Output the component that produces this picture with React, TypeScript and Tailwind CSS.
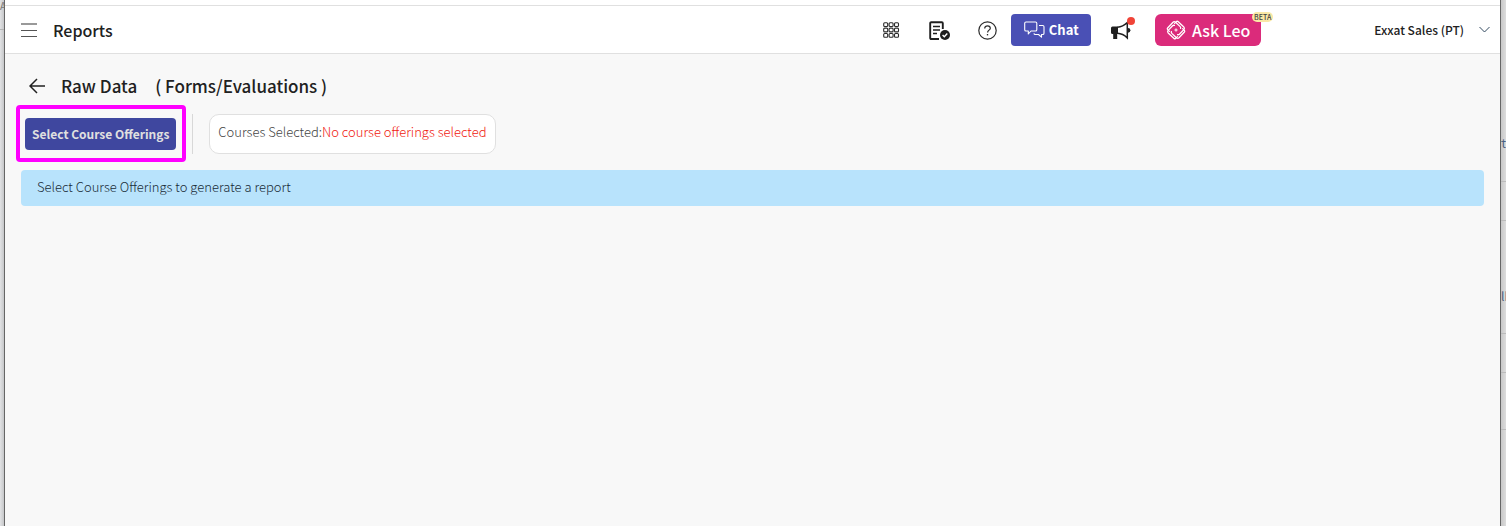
import type { ReactNode } from 'react'

function IconButton({ label, className, children }: { label: string; className: string; children: ReactNode }) {
  return (
    <button type="button" aria-label={label} className={`flex shrink-0 items-center justify-center ${className}`}>
      {children}
    </button>
  )
}

function GridIcon() {
  const cells = [0.7, 6.1, 11.5]
  return (
    <svg width="17" height="17" viewBox="0 0 17 17" fill="none" stroke="#2b2b2b" strokeWidth="1.1">
      {cells.map((y) =>
        cells.map((x) => <rect key={`${x}-${y}`} x={x} y={y} width="4" height="3.8" rx="1" />)
      )}
    </svg>
  )
}

function FormCheckIcon() {
  return (
    <svg width="22" height="20" viewBox="0 0 22 20" fill="none" stroke="#1f1f1f">
      <path d="M10 18H2.2a1 1 0 0 1-1-1V2.2a1 1 0 0 1 1-1h10.6a1 1 0 0 1 1 1V8" strokeWidth="1.9" />
      <path d="M4 5.5h7M4 9h7M4 12.5h4" strokeWidth="1.5" />
      <circle cx="16" cy="14" r="5" fill="#1f1f1f" stroke="none" />
      <path d="m13.6 14.1 1.7 1.7 3-3.2" stroke="#fff" strokeWidth="1.4" />
    </svg>
  )
}

function HelpIcon() {
  return (
    <svg width="19" height="19" viewBox="0 0 19 19" fill="none" stroke="#2b2b2b">
      <circle cx="9.5" cy="9.5" r="8.7" strokeWidth="1.2" />
      <path d="M6.7 7.4c0-1.6 1.2-2.6 2.8-2.6s2.8 1 2.8 2.4c0 1.9-2.7 2-2.7 4.2" strokeWidth="1.2" />
      <path d="M9.5 13v1.4" strokeWidth="1.3" />
    </svg>
  )
}

function ChatIcon() {
  return (
    <svg width="21" height="17" viewBox="0 0 21 17" fill="none" stroke="#fff" strokeWidth="1.1" strokeLinejoin="round">
      <path d="M2 1h9.5a1.3 1.3 0 0 1 1.3 1.3v6.4A1.3 1.3 0 0 1 11.5 10H7l-2.7 3V10H2A1.3 1.3 0 0 1 .7 8.7V2.3A1.3 1.3 0 0 1 2 1Z" />
      <path d="M15 4.5h3.7A1.3 1.3 0 0 1 20 5.8v6.4a1.3 1.3 0 0 1-1.3 1.3h-1.2v2.7l-3-2.7h-3.2a1.3 1.3 0 0 1-1.3-1.3" />
    </svg>
  )
}

function MegaphoneIcon() {
  return (
    <svg width="20" height="19" viewBox="0 0 20 19" fill="#1f1f1f">
      <path d="M1.5 5.5H7v7.5H6.2V18H2.200v-5H1.500A1.500 1.500 0 0 1 0 11.500V7a1.500 1.500 0 0 1 1.500-1.500Z" />
      <path d="M6.500 6.200C10.500 6 13.500 4.300 16.300 1.500v15.500c-2.800-2.800-5.800-4.500-9.800-4.700" fill="none" stroke="#1f1f1f" strokeWidth="1.500" />
      <path d="M17 6.900a2.400 2.400 0 0 1 0 4.800Z" />
    </svg>
  )
}

function LeoIcon() {
  return (
    <svg width="20" height="20" viewBox="0 0 20 20" fill="none" stroke="#fff" strokeWidth="1.3" strokeLinecap="round" strokeLinejoin="round">
      {[0, 90, 180, 270].map((angle) => (
        <path key={angle} transform={`rotate(${angle} 10 10)`} d="M3.4 11.400 1.600 9.600Q.9 8.800 1.600 8L7 2.200Q8.200 1 9.600 2.200L14.200 6.600Q15 7.500 14.600 8.400" />
      ))}
      <path d="M10 8.800v2.400M8.800 10h2.400" strokeWidth="1" />
    </svg>
  )
}

export default function App() {
  return (
    <div className="flex min-h-screen bg-[#d6d7d8] font-['Noto_Sans_CJK_SC',sans-serif] text-[#212121]">
      {/* sliver of the page behind the panel */}
      <div className="w-1 shrink-0 overflow-hidden bg-linear-to-r from-[#e2e3e5] to-[#c6c7c9] text-[10px] leading-3 text-[#777]">
        <div className="h-[30px] border-b border-[#b5b5b5]">A</div>
      </div>

      <div className="min-w-0 flex-1 border-x border-[#666] bg-[#f8f8f8]">
        <div className="h-[5px] bg-white" />
        <header className="flex h-[49px] items-center border-y border-[#e0e0e0] bg-white pr-2.5 pl-4">
          <IconButton label="Menu" className="w-4">
            <svg width="16" height="14" viewBox="0 0 16 14" stroke="#555">
              <path d="M0 1h16" strokeWidth="2" stroke="#999" />
              <path d="M0 7.5h16M0 13.5h16" />
            </svg>
          </IconButton>
          <h1 className="ml-4 text-base leading-6 font-medium">Reports</h1>

          <div className="ml-auto flex items-center">
            <IconButton label="Apps" className="w-[18px] pt-0.5"><GridIcon /></IconButton>
            <IconButton label="Forms" className="ml-7 w-6 pt-0.5"><FormCheckIcon /></IconButton>
            <IconButton label="Help" className="ml-[23px] w-6 pt-0.5"><HelpIcon /></IconButton>
            <button type="button" className="ml-3 flex h-8 w-20 items-center justify-center gap-1 rounded bg-[#4a50b5] text-[13px] font-bold text-white">
              <ChatIcon />
              Chat
            </button>
            <IconButton label="Announcements" className="relative ml-[18px] w-6 pt-0.5">
              <MegaphoneIcon />
              <span className="absolute -top-0.5 -right-0.5 size-2 rounded-full bg-[#f04438]" />
            </IconButton>
            <button type="button" className="relative ml-[22px] flex h-8 w-[106px] items-center justify-center gap-1.5 rounded-md bg-[#db2b7b] text-base font-medium text-white">
              <LeoIcon />
              Ask Leo
              <span className="absolute -top-0.5 -right-3 rounded-full bg-[#f9e8a6] px-0.5 text-[7px] leading-[10px] text-[#444]">
                BETA
              </span>
            </button>
            <button type="button" className="ml-[113px] flex items-center gap-[15px] text-xs leading-5 font-medium">
              Exxat Sales (PT)
              <svg width="11" height="7" viewBox="0 0 11 7" fill="none" stroke="#334b60">
                <path d="m.5 1 5 5 5-5" />
              </svg>
            </button>
          </div>
        </header>

        <main className="px-4 pt-5">
          <div className="flex h-6 items-center pl-2">
            <IconButton label="Back" className="w-4">
              <svg width="16" height="16" viewBox="0 0 16 16" fill="none" stroke="#212121" strokeWidth="1.5">
                <path d="M16 8H1M8 1 1 8l7 7" />
              </svg>
            </IconButton>
            <h2 className="ml-4 flex gap-[18px] text-[17px] leading-6 font-medium">
              <span>Raw Data</span>
              <span>( Forms/Evaluations )</span>
            </h2>
          </div>

          <div className="mt-[7px] -ml-[5px] flex items-center">
            <div className="rounded-sm border-4 border-[#ff00ff] pt-[9px] pr-1.5 pb-2 pl-[5px]">
              <button type="button" className="block h-8 rounded bg-[#3f479f] px-[7px] text-xs font-bold text-[#e0e0e0]">
                Select Course Offerings
              </button>
            </div>
            <div className="ml-1.5 h-10 border-l border-[#d8d8d8]" />
            <div className="ml-4 h-10 rounded-[10px] border border-[#e0e0e0] bg-white px-2 pt-[7px] text-[13px] leading-5 font-light text-[#444]">
              Courses Selected:<span className="text-[#f02010]">No course offerings selected</span>
            </div>
          </div>

          <div className="mt-2 h-9 rounded bg-[#b8e3fc] px-4 text-[13px] leading-[34px] font-light text-[#182c38]">
            Select Course Offerings to generate a report
          </div>
        </main>
      </div>

      <div className="w-[5px] shrink-0 overflow-hidden bg-linear-to-r from-[#c8c8c8] to-[#dcdcdc] text-xs leading-4 text-[#4a5f80]">
        <div className="flex h-[182px] justify-end border-b border-[#bbb] pt-[135px]">rt</div>
        <div className="h-[39px] border-b border-[#bbb]" />
        <div className="h-[113px] border-b border-[#bbb] pt-[67px]">lb</div>
        <div className="h-[39px] border-b border-[#bbb]" />
        <div className="h-[57px] border-b border-[#bbb]" />
      </div>
    </div>
  )
}
